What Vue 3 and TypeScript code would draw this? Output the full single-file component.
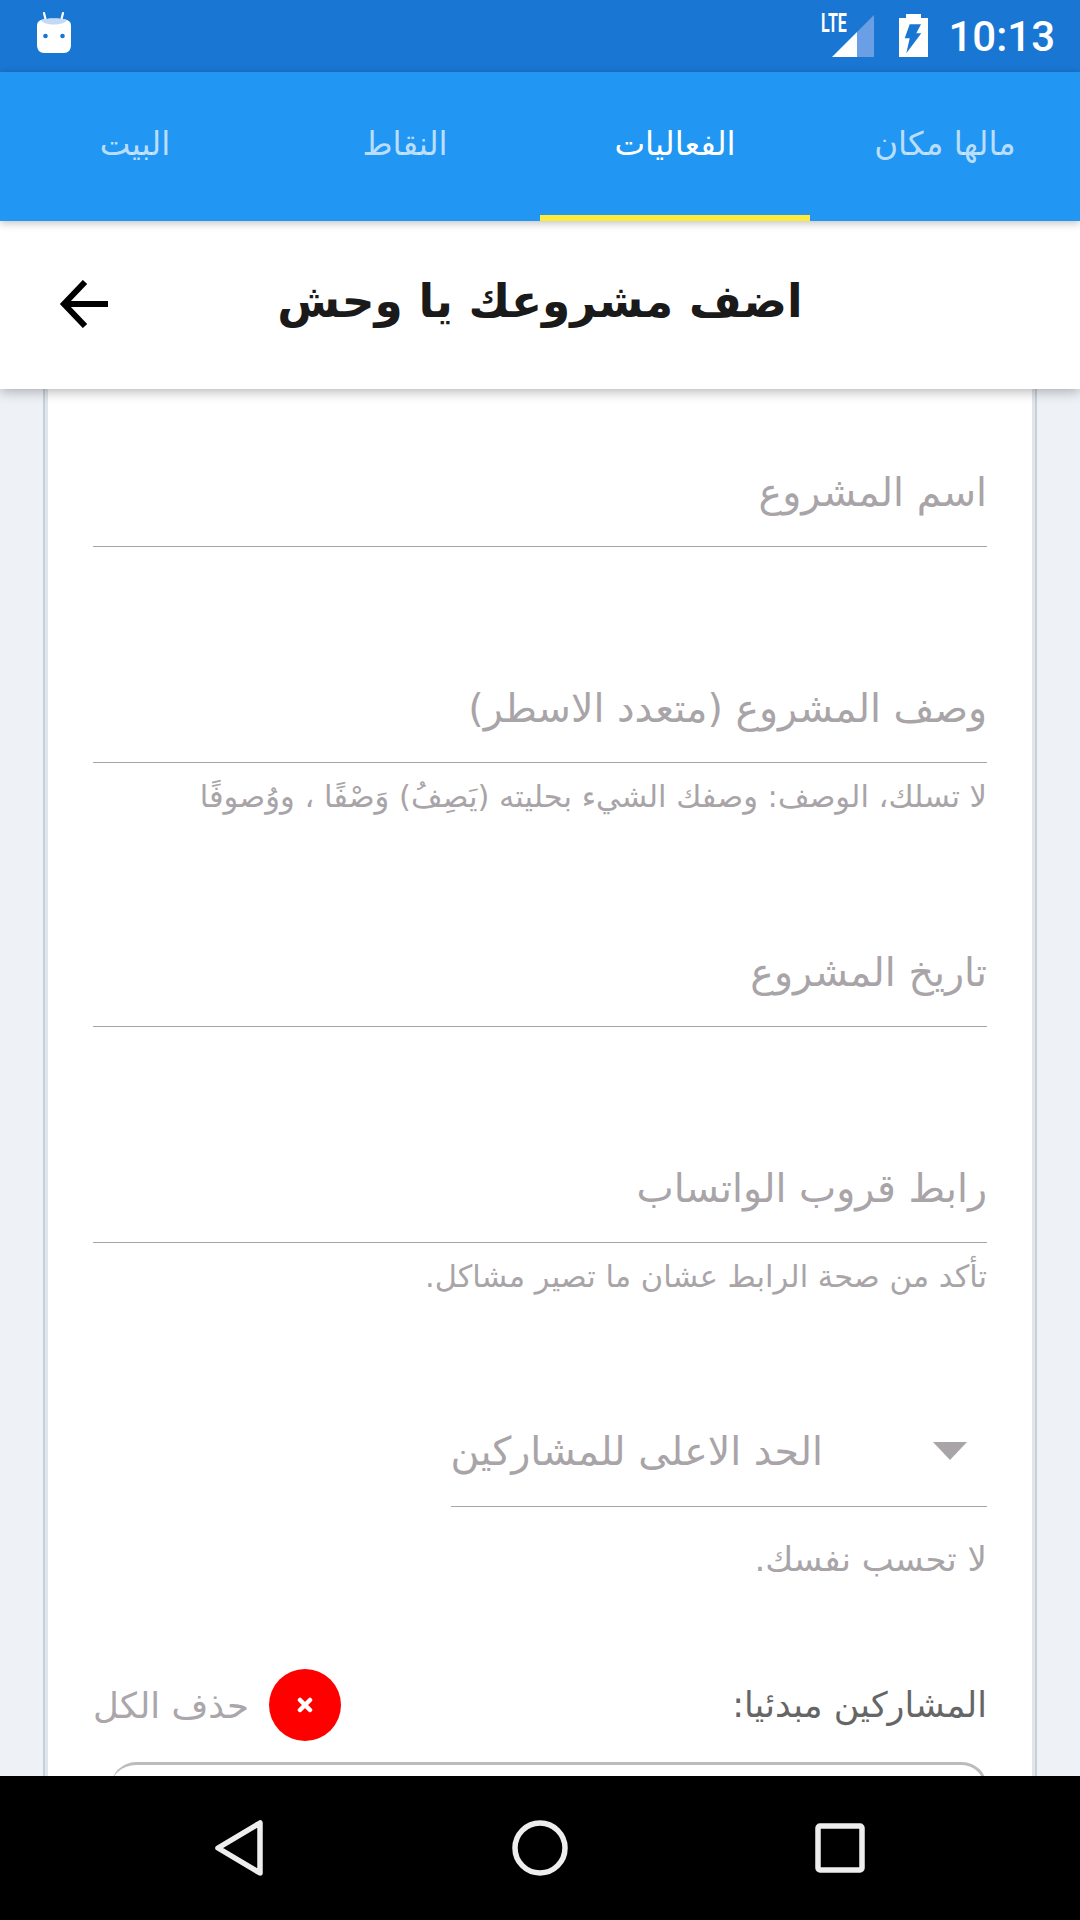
<script setup lang="ts">
const tabs = [
  { label: 'مالها مكان', active: false },
  { label: 'الفعاليات', active: true },
  { label: 'النقاط', active: false },
  { label: 'البيت', active: false },
]
const fields = [
  { label: 'اسم المشروع', hint: '' },
  { label: 'وصف المشروع (متعدد الاسطر)', hint: 'لا تسلك، الوصف: وصفك الشيء بحليته (يَصِفُ) وَصْفًا ، ووُصوفًا' },
  { label: 'تاريخ المشروع', hint: '' },
  { label: 'رابط قروب الواتساب', hint: 'تأكد من صحة الرابط عشان ما تصير مشاكل.' },
]
</script>

<template>
  <div class="page">
    <header class="status">
      <svg class="bug" width="40" height="44" viewBox="0 0 40 44">
        <path d="M10 2l2 8M29 2l-2 8" stroke="#fff" stroke-width="2.2" stroke-linecap="round" />
        <path d="M7 9C13 7 27 7 33 9c3 1 4 3 4 6v19c0 5-3 8-7 8H10c-4 0-7-3-7-8V15c0-3 1-5 4-6z" fill="#fff" />
        <path d="M7 9C13 7 27 7 33 9c-3 6-23 6-26 0z" fill="#c3d9f4" />
        <circle cx="11.5" cy="25" r="2.3" fill="#1976d2" />
        <circle cx="28.5" cy="25" r="2.3" fill="#1976d2" />
      </svg>
      <div class="status-right">
        <div class="signal">
          <span class="lte">LTE</span>
          <svg width="53" height="42" viewBox="0 0 53 42">
            <path d="M36 17L53 0v42H36z" fill="#6a9fe6" />
            <path d="M11 42L36 17v25z" fill="#fff" />
          </svg>
        </div>
        <svg class="batt" width="29" height="43" viewBox="0 0 29 43">
          <path
            fill-rule="evenodd"
            d="M7 0h15v4h7v39H0V4h7zM10.7 10.3H22l-4.7 9h5L7.300 39.300l3.400-15H5.700z"
            fill="#fff"
          />
        </svg>
        <span class="clock">10:13</span>
      </div>
    </header>

    <nav class="tabs">
      <div v-for="t in tabs" :key="t.label" class="tab" :class="{ active: t.active }">{{ t.label }}</div>
    </nav>

    <div class="titlebar">
      <h1 class="title">اضف مشروعك يا وحش</h1>
      <svg class="back" width="52" height="48" viewBox="0 0 52 48">
        <path d="M51 24H8M28 2L7 24l21 22" fill="none" stroke="#000" stroke-width="6" />
      </svg>
    </div>

    <main class="body">
      <section class="card">
        <div v-for="f in fields" :key="f.label" class="field">
          <div class="input">{{ f.label }}</div>
          <div v-if="f.hint" class="hint">{{ f.hint }}</div>
        </div>

        <div class="field narrow">
          <div class="input select">
            <i class="caret"></i>
            <span>الحد الاعلى للمشاركين</span>
          </div>
          <div class="hint">لا تحسب نفسك.</div>
        </div>

        <div class="people">
          <span class="people-label">المشاركين مبدئيا:</span>
          <div class="clear">
            <span class="x-btn">
              <svg width="16" height="16" viewBox="0 0 16 16">
                <path d="M3 3l10 10M13 3L3 13" stroke="#fff" stroke-width="4.500" stroke-linecap="round" />
              </svg>
            </span>
            <span class="clear-label">حذف الكل</span>
          </div>
        </div>
        <div class="box"></div>
      </section>
    </main>

    <footer class="navbar">
      <svg width="50" height="56" viewBox="0 0 50 56">
        <path d="M46 3v50L4 28z" fill="none" stroke="#eee" stroke-width="5.500" stroke-linejoin="round" />
      </svg>
      <svg width="56" height="56" viewBox="0 0 56 56">
        <circle cx="28" cy="28" r="25" fill="none" stroke="#eee" stroke-width="5.500" />
      </svg>
      <svg width="50" height="50" viewBox="0 0 50 50">
        <rect x="3" y="3" width="44" height="44" rx="2" fill="none" stroke="#eee" stroke-width="5.500" />
      </svg>
    </footer>
  </div>
</template>

<style>
html, body { margin: 0; background: #eef2f7; }
</style>

<style scoped>
.page {
  width: 1080px;
  height: 1920px;
  display: flex;
  flex-direction: column;
  overflow: hidden;
  font-family: "DejaVu Sans", "Noto Sans", sans-serif;
  background: #eef2f7;
}
.status {
  height: 72px;
  flex: none;
  background: #1976d2;
  display: flex;
  justify-content: space-between;
  padding: 0 25px 0 34px;
}
.bug { margin-top: 11px; }
.status-right { display: flex; align-items: flex-start; }
.signal { position: relative; width: 53px; height: 42px; margin: 15px 25px 0 0; }
.signal svg { position: absolute; left: 0; top: 0; }
.lte {
  position: absolute;
  left: 0;
  top: -4px;
  font: 700 25px/26px "Roboto", sans-serif;
  color: #fff;
  transform: scaleX(.64);
  transform-origin: left top;
}
.batt { margin: 14px 20px 0 0; }
.clock { font: 500 42px/74px "Roboto", sans-serif; color: #fff; }
.tabs {
  height: 149px;
  flex: none;
  background: #2196f3;
  direction: rtl;
  display: grid;
  grid-template-columns: repeat(4, 270px);
  position: relative;
  z-index: 3;
  box-shadow: 0 2px 8px rgba(0, 0, 0, .25);
}
.tab {
  display: flex;
  align-items: center;
  justify-content: center;
  font-size: 32.500px;
  color: rgba(255, 255, 255, .7);
  padding-bottom: 5px;
}
.tab.active { color: #fff; border-bottom: 6px solid #ffeb3b; padding-bottom: 0; }
.titlebar {
  height: 168px;
  flex: none;
  background: #fff;
  position: relative;
  z-index: 2;
  display: flex;
  align-items: center;
  justify-content: center;
  box-shadow: 0 2px 12px rgba(0, 0, 0, .32);
}
.title { margin: 0 0 8px; direction: rtl; font-size: 45.500px; font-weight: 700; color: #1a1a1a; }
.back { position: absolute; left: 57px; top: 59px; }
.body { flex: 1; min-height: 0; padding: 0 43px; overflow: hidden; }
.card {
  background: #fff;
  border-left: 2px solid #c8d0d4;
  border-right: 2px solid #c8d0d4;
  box-shadow: inset 3px 0 #e0e6ee, inset -3px 0 #e0e6ee;
  padding: 58px 48px 0;
  direction: rtl;
  height: 100%;
}
.field { margin-bottom: 116px; }
.field.narrow { width: 536px; margin-bottom: 114px; }
.input {
  height: 100px;
  box-sizing: border-box;
  border-bottom: 1px solid #a8a4a8;
  font-size: 39.500px;
  line-height: 90px;
  color: #a8a4a8;
  white-space: nowrap;
}
.select { display: flex; align-items: center; gap: 110px; line-height: normal; padding-bottom: 12px; }
.caret {
  flex: none;
  width: 0;
  height: 0;
  border-left: 17px solid transparent;
  border-right: 17px solid transparent;
  border-top: 18px solid #a8a4a8;
  margin-right: 20px;
}
.hint { height: 48px; font-size: 30.500px; line-height: 68px; color: #a8a4a8; white-space: nowrap; }
.narrow .hint { line-height: 104px; font-size: 34px; }
.people { display: flex; align-items: center; justify-content: space-between; height: 72px; }
.people-label { font-size: 35px; color: #666; }
.clear { display: flex; align-items: center; gap: 20px; }
.x-btn {
  width: 72px;
  height: 72px;
  border-radius: 50%;
  background: #f00;
  display: flex;
  align-items: center;
  justify-content: center;
}
.clear-label { font-size: 35.500px; color: #aaa6aa; }
.box {
  margin: 21px 0 0 18px;
  height: 100px;
  border: 3px solid #bdbbbd;
  border-left-width: 0;
  border-radius: 25px 25px 25px 0;
}
.navbar {
  height: 144px;
  flex: none;
  background: #000;
  position: relative;
  z-index: 4;
  display: grid;
  grid-template-columns: 482px 116px 482px;
  align-items: center;
  justify-items: center;
}
.navbar svg:first-child { justify-self: end; margin-right: 218px; }
.navbar svg:last-child { justify-self: start; margin-left: 217px; }
</style>
